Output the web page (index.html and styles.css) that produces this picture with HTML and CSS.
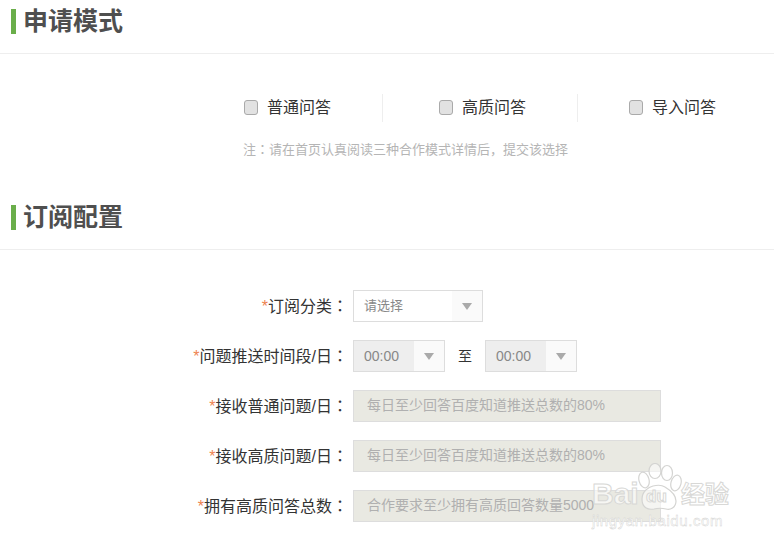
FILE: index.html
```html
<!DOCTYPE html>
<html lang="zh">
<head>
<meta charset="utf-8">
<title>申请</title>
<link rel="stylesheet" href="styles.css">
</head>
<body>
<section class="head first"><h2 class="title">申请模式</h2></section>
<div class="modes">
  <label class="mode m1"><i class="box"></i><span>普通问答</span></label>
  <label class="mode m2"><i class="box"></i><span>高质问答</span></label>
  <label class="mode m3"><i class="box"></i><span>导入问答</span></label>
</div>
<p class="note">注<span class="colon" lang="zh-Hant">：</span>请在首页认真阅读三种合作模式详情后，提交该选择</p>
<section class="head second"><h2 class="title">订阅配置</h2></section>
<form class="form">
  <div class="row">
    <div class="label"><em>*</em>订阅分类<span class="colon" lang="zh-Hant">：</span></div>
    <div class="select wide"><span class="val">请选择</span><span class="arrow"><b></b></span></div>
  </div>
  <div class="row">
    <div class="label"><em>*</em>问题推送时间段/日<span class="colon" lang="zh-Hant">：</span></div>
    <div class="select time"><span class="val">00:00</span><span class="arrow"><b></b></span></div>
    <span class="to">至</span>
    <div class="select time"><span class="val">00:00</span><span class="arrow"><b></b></span></div>
  </div>
  <div class="row">
    <div class="label"><em>*</em>接收普通问题/日<span class="colon" lang="zh-Hant">：</span></div>
    <div class="input">每日至少回答百度知道推送总数的80%</div>
  </div>
  <div class="row">
    <div class="label"><em>*</em>接收高质问题/日<span class="colon" lang="zh-Hant">：</span></div>
    <div class="input">每日至少回答百度知道推送总数的80%</div>
  </div>
  <div class="row">
    <div class="label"><em>*</em>拥有高质问答总数<span class="colon" lang="zh-Hant">：</span></div>
    <div class="input">合作要求至少拥有高质回答数量5000</div>
  </div>
</form>
<div class="mark" aria-hidden="true">
  <div class="mark-top">
    <span class="mark-latin">Bai</span>
    <svg class="paw" width="44" height="48" viewBox="0 0 44 48">
      <g fill="rgba(255,255,255,.55)" stroke="#d4d4d2" stroke-width="1.2">
        <ellipse cx="6" cy="17" rx="5" ry="8" transform="rotate(-15 6 17)"/>
        <ellipse cx="17" cy="8" rx="6" ry="7.5"/>
        <ellipse cx="29" cy="10" rx="5.5" ry="7.5"/>
        <ellipse cx="38" cy="20" rx="5" ry="8" transform="rotate(15 38 20)"/>
        <path d="M4 36c0-8 7-12 11-13 4-1 9-1 12 1 5 3 11 8 11 14 0 7-6 9-10 8-4-1-8-1-12 0-6 1-12-1-12-10z"/>
      </g>
    </svg>
    <span class="mark-du">du</span>
    <span class="mark-cn">经验</span>
  </div>
  <div class="mark-url">jingyan.baidu.com</div>
</div>
</body>
</html>
```
FILE: styles.css
```css
* { box-sizing: border-box; }
html, body { margin: 0; padding: 0; }
body {
  position: relative;
  width: 774px;
  height: 546px;
  overflow: hidden;
  background: #fff;
  font-family: "Liberation Sans", "Noto Sans CJK SC", sans-serif;
  color: #333;
}
.colon { font-family: "Noto Sans CJK TC", sans-serif; }
.head {
  height: 54px;
  padding: 9px 0 0 11px;
  border-bottom: 1px solid #eee;
}
.second { margin-top: 29px; height: 59px; padding-top: 14px; }
.title {
  margin: 0;
  height: 25px;
  padding-left: 7px;
  border-left: 5px solid #6aae4a;
  font-size: 25px;
  line-height: 24px;
  font-weight: bold;
  color: #4f4f4f;
}
.modes {
  display: flex;
  margin-top: 40px;
  height: 28px;
  padding-left: 244px;
}
.mode {
  display: flex;
  align-items: center;
  font-size: 16px;
  line-height: 24px;
  color: #333;
}
.mode span { margin: -1px 0 0 9px; }
.m1 { width: 139px; border-right: 1px solid #eee; }
.m2 { width: 195px; padding-left: 56px; border-right: 1px solid #eee; }
.m3 { padding-left: 51px; }
.box {
  display: block;
  width: 14px;
  height: 15px;
  margin-top: -2px;
  border: 1px solid #aaa;
  border-radius: 3px;
  background: #e2e2e2;
}
.note {
  margin: 16px 0 0;
  padding-left: 243px;
  height: 24px;
  font-size: 13px;
  line-height: 22px;
  color: #b5b5b5;
}
.form {
  display: flex;
  flex-direction: column;
  gap: 18px;
  margin-top: 40px;
}
.row {
  display: flex;
  align-items: center;
  height: 32px;
}
.label {
  width: 353px;
  padding: 0 5px 2px 0;
  text-align: right;
  font-size: 16px;
  color: #333;
  white-space: nowrap;
}
.label em { font-style: normal; color: #ee8350; }
.select {
  display: flex;
  height: 32px;
  border: 1px solid #ddd;
  font-size: 13px;
  line-height: 30px;
  color: #888;
}
.val { flex: 1; padding-left: 10px; }
.arrow {
  display: flex;
  align-items: center;
  justify-content: center;
  background: #fafafa;
}
.arrow b {
  width: 0;
  height: 0;
  border-left: 5px solid transparent;
  border-right: 5px solid transparent;
  border-top: 7px solid #aaa;
}
.wide { width: 130px; }
.wide .arrow { width: 30px; }
.time { width: 92px; font-size: 14px; }
.time .val { background: #eee; }
.time .arrow { width: 30px; }
.to {
  width: 40px;
  padding-bottom: 2px;
  text-align: center;
  font-size: 14px;
  color: #333;
}
.input {
  width: 308px;
  height: 32px;
  padding-left: 13px;
  border: 1px solid #ddd;
  background: #e9e9e2;
  font-size: 14px;
  line-height: 28px;
  color: #b0b0b0;
  white-space: nowrap;
}
.mark {
  position: absolute;
  left: 592px;
  top: 463px;
  width: 140px;
  color: rgba(255,255,255,.6);
}
.mark-top { position: relative; height: 47px; }
.mark-latin, .mark-du, .mark-cn {
  position: absolute;
  font-weight: bold;
  -webkit-text-stroke: 1px #d8d8d6;
  color: rgba(255,255,255,.6);
  white-space: nowrap;
}
.mark-latin { left: 0; top: 16px; font-size: 30px; line-height: 30px; }
.paw { position: absolute; left: 46px; top: 0; }
.mark-du { left: 54px; top: 24px; font-size: 17px; line-height: 20px; }
.mark-cn { left: 89px; top: 18px; font-size: 24px; line-height: 28px; }
.mark-url {
  margin-top: 2px;
  font-size: 15px;
  line-height: 17px;
  letter-spacing: .6px;
  white-space: nowrap;
  color: #fff;
  -webkit-text-stroke: .4px #d0d0ce;
}
```
